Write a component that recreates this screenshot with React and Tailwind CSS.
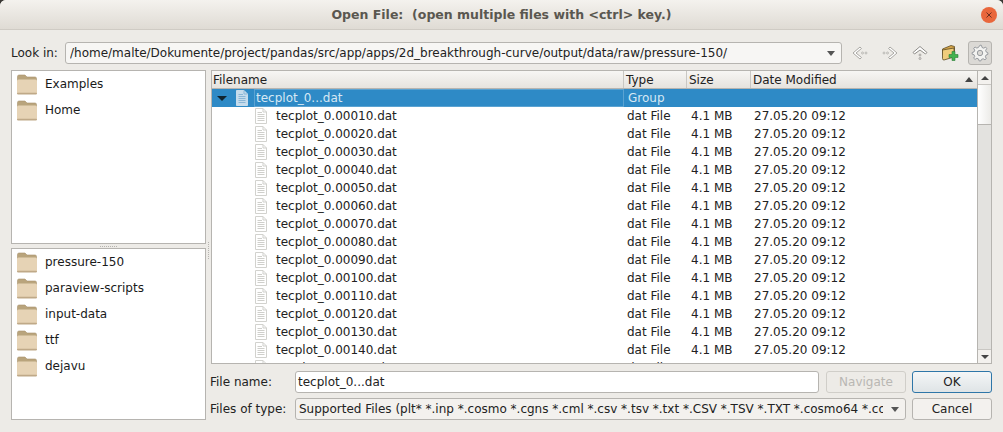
const sidebarTop = ['Examples', 'Home'];
const sidebarBottom = ['pressure-150', 'paraview-scripts', 'input-data', 'ttf', 'dejavu'];
const files = ['00010', '00020', '00030', '00040', '00050', '00060', '00070', '00080', '00090', '00100', '00110', '00120', '00130', '00140', '00150'];

function FolderIcon() {
  return (
    <svg width="20" height="21" viewBox="0 0 20 21" className="shrink-0">
      <path d="M0.5 2.5 Q0.5 1 2 1 H8 L10 3 H18 Q19.5 3 19.5 4.5 V9 H0.5 Z" fill="#b9a47c" stroke="#a8926c" strokeWidth="0.6" />
      <rect x="0" y="5.5" width="20" height="14.5" rx="1.5" fill="#e6d3b5" />
      <rect x="0" y="18.8" width="20" height="1.6" rx="0.8" fill="#bfa988" />
    </svg>
  );
}

function DocIcon({ selected }) {
  const line = selected ? '#8ab6d6' : '#cfcfcb';
  return (
    <svg width="14" height="16" viewBox="0 0 14 16" className="shrink-0">
      <path d="M1.5 0.5 H9 L12.5 4 V15.5 H1.5 Z" fill={selected ? '#c6dcec' : '#fff'} stroke={selected ? '#c6dcec' : '#d2d2ce'} />
      <path d="M9 0.5 V4 H12.5" fill="none" stroke={line} />
      <path d="M3.5 4.5 H8 M3.5 6.5 H10.5 M3.5 8.5 H10.5 M3.5 10.5 H10.5 M3.5 12.5 H10.5" stroke={line} />
    </svg>
  );
}

function Places({ items, className }) {
  return (
    <div className={`bg-white border border-[#b6b4b0] ${className}`}>
      {items.map((name) => (
        <div key={name} className="h-[26px] flex items-center pl-[5px] gap-[8px] text-[#1a1a1a]">
          <FolderIcon />
          <span>{name}</span>
        </div>
      ))}
    </div>
  );
}

function ToolIcon({ children, className = '' }) {
  return <div className={`w-6 h-6 flex items-center justify-center ${className}`}>{children}</div>;
}

function Arrow({ flip }) {
  return (
    <svg width="16" height="16" viewBox="0 0 16 16" style={flip ? { transform: 'scaleX(-1)' } : undefined}>
      <path d="M8 2 L1 8 L8 14 L9.5 12.5 L4 8 L9.5 3.5 Z" fill="#fff" stroke="#a9a7a3" />
      <circle cx="10.5" cy="8" r="1" fill="none" stroke="#a9a7a3" strokeWidth="0.7" />
      <circle cx="14" cy="8" r="1" fill="none" stroke="#a9a7a3" strokeWidth="0.7" />
    </svg>
  );
}

export default function App() {
  return (
    <div className="w-[1003px] h-[432px] bg-[#3a3835] overflow-hidden leading-[16px] text-[12px] text-[#222] font-['DejaVu_Sans',sans-serif]">
      <div className="h-full bg-[#edebe7] rounded-t-[6px] flex flex-col overflow-hidden">
        {/* title bar */}
        <div className="h-[30px] shrink-0 relative flex items-center justify-center bg-gradient-to-b from-[#f4f2ee] to-[#dfdbd4] border-b border-[#cfcbc4]">
          <span className="font-bold text-[12.5px] text-[#5a5750]">Open File:&nbsp; (open multiple files with &lt;ctrl&gt; key.)</span>
          <div className="absolute right-[6px] top-[7px] w-[16px] h-[16px] rounded-full bg-[#e9673c] flex items-center justify-center">
            <svg width="8" height="8" viewBox="0 0 8 8"><path d="M1.5 1.5 L6.5 6.5 M6.5 1.5 L1.5 6.5" stroke="#6e3020" strokeWidth="1" /></svg>
          </div>
        </div>

        {/* look in */}
        <div className="h-[24px] mt-[11px] shrink-0 flex items-center pl-[11px] pr-[11px]">
          <span className="w-[54px] shrink-0">Look in:</span>
          <div className="w-[777px] h-[22px] shrink-0 bg-[#f7f6f4] border border-[#b6b4b0] rounded-[3px] flex items-center pl-[4px] pr-[6px]">
            <span className="flex-1 truncate">/home/malte/Dokumente/project/pandas/src/app/apps/2d_breakthrough-curve/output/data/raw/pressure-150/</span>
            <span className="w-0 h-0 border-x-[4px] border-x-transparent border-t-[5px] border-t-[#555]" />
          </div>
          <div className="flex-1 flex items-center gap-[6px] pl-[6px]">
            <ToolIcon><Arrow /></ToolIcon>
            <ToolIcon><Arrow flip /></ToolIcon>
            <ToolIcon>
              <svg width="16" height="16" viewBox="0 0 16 16">
                <path d="M8 1.5 L15 7.5 L13.5 9 L8 5 L2.5 9 L1 7.5 Z" fill="#fff" stroke="#8f8d89" />
                <circle cx="8" cy="10" r="1" fill="none" stroke="#8f8d89" strokeWidth="0.7" />
                <circle cx="8" cy="13.5" r="1" fill="none" stroke="#8f8d89" strokeWidth="0.7" />
              </svg>
            </ToolIcon>
            <ToolIcon>
              <svg width="18" height="18" viewBox="0 0 18 18">
                <path d="M1.5 5 L10 1.5 L13.5 2.5 V11 H2 Z" fill="#d9a74a" stroke="#5c4a22" strokeWidth="0.8" />
                <path d="M1.5 6 L13 4 V13 L3 16 Q1.5 16 1.5 14.5 Z" fill="#f0cd7c" stroke="#5c4a22" strokeWidth="0.8" />
                <path d="M11 7.5 H14 V10.5 H17 V13.5 H14 V16.5 H11 V13.5 H8 V10.5 H11 Z" fill="#43b34f" stroke="#2b7d37" strokeWidth="0.6" />
              </svg>
            </ToolIcon>
            <ToolIcon className="bg-[#dbd9d5] border border-[#b6b4b0] rounded-[3px]">
              <svg width="18" height="18" viewBox="0 0 16 16">
                <path d="M8 1 L9.3 1.2 L9.8 3.1 L11.3 3.7 L13 2.8 L14 4 L13 5.7 L13.6 7.2 L15 7.8 V9.2 L13.4 9.8 L12.8 11.3 L13.6 13 L12.4 14 L10.8 13.1 L9.3 13.7 L8.8 15 H7.2 L6.7 13.3 L5.2 12.7 L3.6 13.7 L2.4 12.6 L3.3 11 L2.7 9.5 L1 9 V7.6 L2.7 7 L3.3 5.5 L2.4 3.8 L3.6 2.7 L5.2 3.6 L6.7 3 Z" fill="#f3f3f1" stroke="#8f9398" strokeWidth="0.8" />
                <circle cx="8" cy="8" r="2.4" fill="#dbd9d5" stroke="#8f9398" strokeWidth="0.8" />
              </svg>
            </ToolIcon>
          </div>
        </div>

        {/* main */}
        <div className="flex mt-[5px] pl-[11px] pr-[11px]">
          {/* places */}
          <div className="w-[195px] shrink-0 flex flex-col">
            <Places items={sidebarTop} className="h-[174px]" />
            <div className="h-[4px] flex items-center justify-center">
              <span className="w-[17px] border-t border-dotted border-[#b6b4b0]" />
            </div>
            <Places items={sidebarBottom} className="h-[172px]" />
          </div>

          <div className="w-[5px] shrink-0 relative">
            <span className="absolute left-[2px] top-[172px] h-[17px] border-l border-dotted border-[#b6b4b0]" />
          </div>

          {/* tree + inputs */}
          <div className="flex-1 min-w-0 flex flex-col">
            <div className="h-[294px] bg-white border border-[#b6b4b0] flex overflow-hidden">
              <div className="flex-1 min-w-0 overflow-hidden">
                <div className="h-[18px] flex items-center bg-gradient-to-b from-[#f7f6f4] to-[#e6e3de] border-b border-[#b6b4b0]">
                  <span className="w-[412px] pl-[1px] border-r border-[#c9c7c3] h-full flex items-center">Filename</span>
                  <span className="w-[63px] pl-[2px] border-r border-[#c9c7c3] h-full flex items-center">Type</span>
                  <span className="w-[64px] pl-[2px] border-r border-[#c9c7c3] h-full flex items-center">Size</span>
                  <span className="flex-1 pl-[2px] h-full flex items-center justify-between pr-[4px]">
                    Date Modified
                    <span className="w-0 h-0 border-x-[4px] border-x-transparent border-b-[5px] border-b-[#444]" />
                  </span>
                </div>
                <div className="h-[18px] bg-[#2e8ac6] text-[#d6e8f4] flex items-center">
                  <div className="w-[412px] h-full flex items-center pl-[5px]">
                    <span className="w-0 h-0 border-x-[5px] border-x-transparent border-t-[5px] border-t-[#10242f]" />
                    <span className="ml-[8px]"><DocIcon selected /></span>
                    <span className="ml-[5px] flex-1 h-full flex items-center pl-[1px] border border-[#5ba3d2]">tecplot_0...dat</span>
                  </div>
                  <span className="pl-[4px]">Group</span>
                </div>
                {files.map((f) => (
                  <div key={f} className="h-[18px] flex items-center">
                    <div className="w-[412px] flex items-center pl-[42px]">
                      <DocIcon />
                      <span className="ml-[8px]">tecplot_0.{f}.dat</span>
                    </div>
                    <span className="w-[63px] pl-[3px]">dat File</span>
                    <span className="w-[64px] pl-[4px]">4.1 MB</span>
                    <span className="pl-[3px]">27.05.20 09:12</span>
                  </div>
                ))}
              </div>
              {/* scrollbar */}
              <div className="w-[14px] shrink-0 bg-[#e3e2df] border-l border-[#b6b4b0] flex flex-col">
                <div className="h-[14px] bg-[#f3f1ee] flex items-center justify-center border-b border-[#c9c7c3]">
                  <span className="w-0 h-0 border-x-[4px] border-x-transparent border-b-[4px] border-b-[#444]" />
                </div>
                <div className="h-[40px] bg-gradient-to-r from-[#ffffff] to-[#ecebe8] border-b border-[#b6b4b0]" />
                <div className="flex-1" />
                <div className="h-[14px] bg-[#f3f1ee] flex items-center justify-center border-t border-[#c9c7c3]">
                  <span className="w-0 h-0 border-x-[4px] border-x-transparent border-t-[4px] border-t-[#444]" />
                </div>
              </div>
            </div>

            <div className="mt-[7px] h-[22px] flex items-center">
              <span className="w-[85px] -ml-[1px] shrink-0">File name:</span>
              <div className="w-[524px] h-[22px] shrink-0 bg-white border border-[#b6b4b0] rounded-[3px] flex items-center pl-[2px]">tecplot_0...dat</div>
              <div className="w-[80px] h-[22px] ml-[7px] shrink-0 border border-[#d0cec9] rounded-[3px] flex items-center justify-center text-[#b9b7b3]">Navigate</div>
              <div className="w-[80px] h-[22px] ml-[6px] shrink-0 border border-[#2e76a8] rounded-[3px] bg-gradient-to-b from-[#f4f6f7] to-[#dfe4e6] flex items-center justify-center">OK</div>
            </div>
            <div className="mt-[5px] h-[22px] flex items-center">
              <span className="w-[85px] -ml-[1px] shrink-0">Files of type:</span>
              <div className="w-[611px] h-[22px] shrink-0 bg-[#f3f1ee] border border-[#b6b4b0] rounded-[3px] flex items-center pl-[3px] pr-[6px]">
                <span className="flex-1 min-w-0 overflow-hidden whitespace-nowrap mr-[8px]">Supported Files (plt* *.inp *.cosmo *.cgns *.cml *.csv *.tsv *.txt *.CSV *.TSV *.TXT *.cosmo64 *.cosmo *.cgns</span>
                <span className="w-0 h-0 border-x-[4px] border-x-transparent border-t-[5px] border-t-[#555]" />
              </div>
              <div className="w-[80px] h-[22px] ml-[6px] shrink-0 border border-[#b6b4b0] rounded-[3px] bg-[#f3f1ee] flex items-center justify-center">Cancel</div>
            </div>
          </div>
        </div>
      </div>
    </div>
  );
}
